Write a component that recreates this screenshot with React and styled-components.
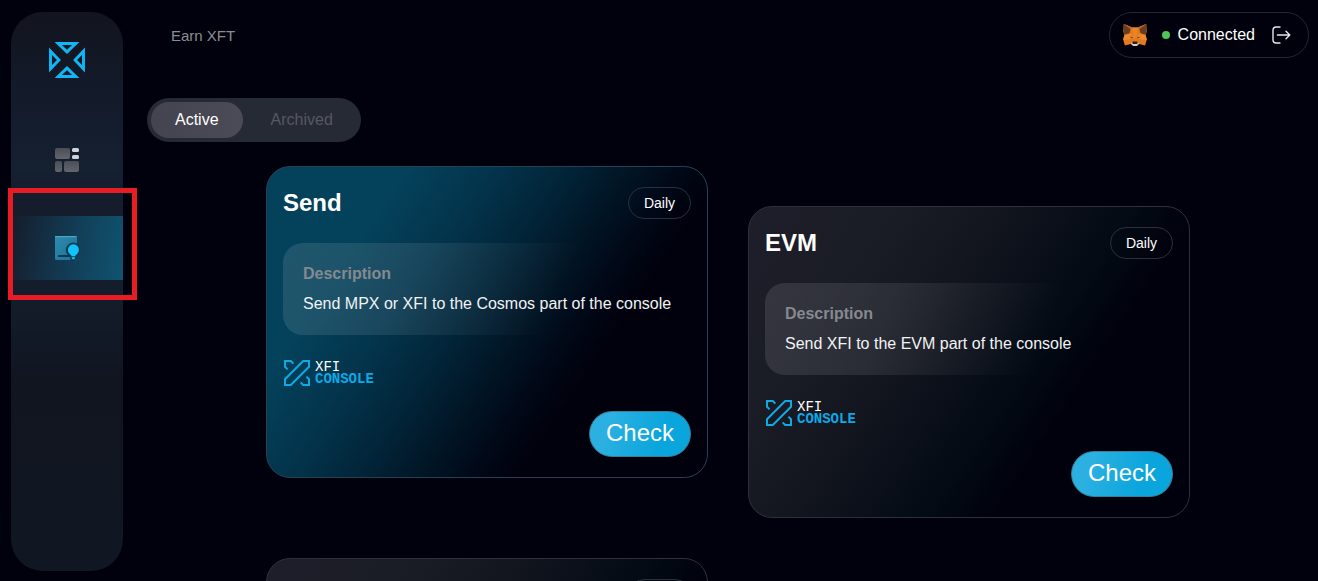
import React, { useState } from 'react';
import styled, { createGlobalStyle, css } from 'styled-components';

const colors = {
  background: '#00010c',
  white: '#ffffff',
  muted: '#8b8d93',
  accent: '#0fb7f5',
  green: '#4fc65a',
  red: '#e81c24',
};

const GlobalStyle = createGlobalStyle`
  * {
    box-sizing: border-box;
  }
  body {
    margin: 0;
    overflow: hidden;
    background: ${colors.background};
    color: ${colors.white};
    font-family: 'Liberation Sans', Arial, sans-serif;
    font-size: 16px;
  }
  button {
    font-family: inherit;
    cursor: pointer;
  }
`;

const Shell = styled.div`
  display: flex;
  align-items: flex-start;
  height: 100vh;
  overflow: hidden;
`;

const Sidebar = styled.aside`
  display: flex;
  flex-direction: column;
  align-items: center;
  flex: none;
  width: 112px;
  height: calc(100vh - 22px);
  margin: 12px 24px 10px 11px;
  padding-top: 30px;
  border-radius: 32px;
  background: linear-gradient(
    180deg,
    #12141e 0%,
    #131a2a 14%,
    #152031 28%,
    #151c2c 34%,
    #141d2c 50%,
    #101520 66%,
    #111722 100%
  );
`;

const Nav = styled.nav`
  display: flex;
  flex-direction: column;
  gap: 24px;
  width: 100%;
  margin-top: 50px;
`;

const NavLink = styled.a`
  position: relative;
  display: flex;
  align-items: center;
  justify-content: center;
  height: 64px;
  ${(props) =>
    props.$active &&
    css`
      background: linear-gradient(100deg, #151f2f 5%, #12405a 60%, #0f5470 100%);
    `}
`;

const Highlight = styled.span`
  position: absolute;
  top: -28px;
  right: -14px;
  bottom: -20px;
  left: -3px;
  border: 5px solid ${colors.red};
  pointer-events: none;
`;

const Main = styled.main`
  display: flex;
  flex-direction: column;
  flex: 1;
  min-width: 0;
  padding: 12px 9px 0 0;
`;

const Header = styled.header`
  display: flex;
  align-items: center;
  justify-content: space-between;
  height: 46px;
  padding-left: 24px;
`;

const PageTitle = styled.h1`
  margin: 0;
  color: ${colors.muted};
  font-size: 15px;
  font-weight: 400;
`;

const Wallet = styled.button`
  display: flex;
  align-items: center;
  height: 46px;
  padding: 0 17px 0 13px;
  border: 1px solid #24262f;
  border-radius: 23px;
  background: transparent;
  color: ${colors.white};
  font-size: 16px;
`;

const Status = styled.span`
  display: flex;
  align-items: center;
  gap: 8px;
  margin: 0 17px 0 15px;

  &::before {
    content: '';
    width: 8px;
    height: 8px;
    border-radius: 50%;
    background: ${colors.green};
  }
`;

const Tabs = styled.div`
  display: flex;
  align-self: flex-start;
  gap: 4px;
  height: 44px;
  margin-top: 40px;
  padding: 4px;
  border-radius: 22px;
  background: #262a35;
`;

const Tab = styled.button`
  padding: 0 24px;
  border: 0;
  border-radius: 18px;
  background: transparent;
  color: #565862;
  font-size: 16px;
  ${(props) =>
    props.$active &&
    css`
      background: linear-gradient(90deg, #434450, #4a4b57);
      color: ${colors.white};
    `}
`;

const Quests = styled.section`
  display: grid;
  grid-template-columns: repeat(2, minmax(0, 1fr));
  gap: 40px;
  width: 100%;
  max-width: 924px;
  margin: 24px auto 0;
`;

const cardBackgrounds = {
  blue: 'linear-gradient(124deg, #04425b 0%, #04415a 22%, #03344c 35%, #022539 46%, #011525 56%, #010817 64%, #00010c 71%)',
  gray: 'linear-gradient(124deg, #1d1e29 0%, #1a1c26 22%, #13161f 38%, #0a0f19 50%, #030a14 60%, #00010c 70%)',
};

const Card = styled.article`
  display: flex;
  flex-direction: column;
  gap: 24px;
  padding: 20px 16px;
  border: 1px solid ${(props) => (props.$tone === 'blue' ? '#264251' : '#2d2f39')};
  border-radius: 24px;
  background: ${(props) => cardBackgrounds[props.$tone]};

  &:nth-child(even) {
    margin-top: 40px;
  }
  &:nth-child(odd) {
    margin-bottom: 40px;
  }
`;

const CardHeader = styled.div`
  display: flex;
  align-items: center;
  justify-content: space-between;
  height: 32px;
`;

const CardTitle = styled.h2`
  margin: 0;
  font-size: 24px;
  line-height: 32px;
  font-weight: 700;
`;

const Period = styled.span`
  height: 32px;
  padding: 0 15px;
  border: 1px solid #2a303b;
  border-radius: 16px;
  font-size: 14px;
  line-height: 30px;
`;

const Description = styled.div`
  display: flex;
  flex-direction: column;
  gap: 8px;
  padding: 20px;
  border-radius: 20px;
  background: linear-gradient(
    110deg,
    rgba(255, 255, 255, 0.11) 0%,
    rgba(255, 255, 255, 0.09) 30%,
    rgba(255, 255, 255, 0) 68%
  );
  line-height: 22px;

  h3 {
    margin: 0;
    color: #86898f;
    font-size: 16px;
  }
  p {
    margin: 0;
    color: #f1f3f5;
    white-space: nowrap;
  }
`;

const Brand = styled.div`
  display: flex;
  align-items: center;
  gap: 4px;
  height: 28px;
`;

const BrandName = styled.div`
  display: flex;
  flex-direction: column;
  font-family: 'Liberation Mono', monospace;
  font-size: 14px;
  line-height: 12px;
`;

const BrandAccent = styled.span`
  color: #0ba9e6;
  font-weight: 700;
`;

const CheckButton = styled.button`
  align-self: flex-end;
  height: 46px;
  padding: 0 16px 2px;
  border: 1px solid #3b7f97;
  border-radius: 23px;
  background: linear-gradient(110deg, #2bb0e1 20%, #0aa5dc 70%);
  color: ${colors.white};
  font-size: 24px;
`;

const Logo = () => (
  <svg width="36" height="36" viewBox="0 0 36 36" fill="none" stroke={colors.accent} strokeWidth="2.9">
    <path d="M9.2 1.5h17.6L18 9.9z" />
    <path d="M9.2 34.5h17.6L18 26.1z" />
    <path d="M1.5 9.2v17.6L9.9 18z" />
    <path d="M34.5 9.2v17.6L26.1 18z" />
  </svg>
);

const DashboardIcon = () => (
  <svg width="24" height="24" viewBox="0 0 24 24">
    <defs>
      <linearGradient id="tile" x1="0" y1="0" x2="0" y2="1">
        <stop offset="0" stopColor="#4b4e57" />
        <stop offset="1" stopColor="#62656e" />
      </linearGradient>
    </defs>
    <rect width="15" height="11" rx="2" fill="url(#tile)" />
    <rect y="13" width="7" height="11" rx="2" fill="url(#tile)" />
    <rect x="9" y="13" width="15" height="11" rx="2" fill="url(#tile)" />
    <rect x="17" width="7" height="4" rx="1.5" fill="#d0d3dc" />
    <rect x="17" y="7" width="7" height="4" rx="1.5" fill="#d0d3dc" />
  </svg>
);

const EarnIcon = () => (
  <svg width="26" height="26" viewBox="-1 -1 26 26">
    <defs>
      <linearGradient id="page" x1="0" y1="0" x2="1" y2="1">
        <stop offset="0" stopColor="#2c8caf" />
        <stop offset="1" stopColor="#1f7093" />
      </linearGradient>
    </defs>
    <rect width="22" height="24" rx="1.5" fill="url(#page)" />
    <path d="M0 .6h21.5" stroke="#4da6c4" strokeWidth="1.2" />
    <path d="M3 20h12" stroke="#0b3850" strokeWidth="2" />
    <circle cx="18.2" cy="14" r="7.4" fill="#0e3b54" />
    <path d="M14 19h8v3.4l-2 2.2h-4z" fill="#0e3b54" />
    <circle cx="18.4" cy="13.8" r="5.5" fill="#12c2fa" />
    <path d="M14.8 17.4h7.2l-2 2.8h-3.2z" fill="#12c2fa" />
    <path d="M16.4 21.2h4l-1 2h-2z" fill="#12c2fa" />
  </svg>
);

const FoxIcon = () => (
  <svg width="24" height="24" viewBox="0 0 24 24">
    <path d="M.8 1l8.6 3.4h5.2L23.2 1l.5 7.2-1 4.2 1.1 4.2-1.7 5.8-5.8-1.5-2.6 2.1h-3.4l-2.6-2.1-5.8 1.5-1.7-5.8 1.1-4.2-1-4.2z" fill="#e37a22" />
    <path d="M.8 1l7 4.8-1.4 4.4-5.1 1.6-.6-3.6z" fill="#6b3d20" />
    <path d="M23.2 1l-7 4.8 1.4 4.4 5.1 1.6.6-3.6z" fill="#6b3d20" />
    <path d="M.8 1l8.6 3.4-1.6 1.8z" fill="#b8672a" />
    <path d="M23.2 1l-8.6 3.4 1.6 1.8z" fill="#b8672a" />
    <path d="M1.3 12.4l6.9-1.6 1.2 4.6-4.2 1.2-5 .2z" fill="#f08a2a" />
    <path d="M22.7 12.4l-6.9-1.6-1.2 4.6 4.2 1.2 5 .2z" fill="#f08a2a" />
    <path d="M9.4 4.4h5.2l-1 10.6h-3.2z" fill="#ea8428" />
    <path d="M6.4 13.4l3.2.8-.6 1.2z" fill="#5a3a26" />
    <path d="M17.6 13.4l-3.2.8.6 1.2z" fill="#5a3a26" />
    <path d="M7.7 20.2l2.3-.8h4l2.3.8-2.6 2.8h-3.4z" fill="#d9cfc8" />
    <path d="M9.4 18.9l.6-.5h4l.6.5-.2 2H9.6z" fill="#2b211c" />
  </svg>
);

const LogoutIcon = () => (
  <svg width="19" height="18" viewBox="0 0 19 18" fill="none" stroke="#e6e7ea" strokeWidth="1.4" strokeLinecap="round" strokeLinejoin="round">
    <path d="M8 1H4.2Q1 1 1 4.2v9.6Q1 17 4.2 17H8" />
    <path d="M5.4 9h12.4M14 5.2L17.8 9 14 12.8" />
  </svg>
);

const ConsoleIcon = () => (
  <svg width="28" height="28" viewBox="0 0 28 28" fill="none" stroke="#0fa9e4" strokeWidth="2">
    <path d="M4.6 10.4L2 7.8V2h5.8l2.6 2.6" />
    <path d="M20.2 2H26v5.8L7.8 26H2v-5.8z" />
    <path d="M23.4 17.6l2.6 2.6V26h-5.8l-2.6-2.6" />
  </svg>
);

const quests = [
  {
    title: 'Send',
    tone: 'blue',
    period: 'Daily',
    text: 'Send MPX or XFI to the Cosmos part of the console',
  },
  {
    title: 'EVM',
    tone: 'gray',
    period: 'Daily',
    text: 'Send XFI to the EVM part of the console',
  },
  {
    title: 'EVM',
    tone: 'gray',
    period: 'Daily',
    text: 'Send XFI to the EVM part of the console',
  },
];

const Quest = ({ title, tone, period, text }) => (
  <Card $tone={tone}>
    <CardHeader>
      <CardTitle>{title}</CardTitle>
      <Period>{period}</Period>
    </CardHeader>
    <Description>
      <h3>Description</h3>
      <p>{text}</p>
    </Description>
    <Brand>
      <ConsoleIcon />
      <BrandName>
        <span>XFI</span>
        <BrandAccent>CONSOLE</BrandAccent>
      </BrandName>
    </Brand>
    <CheckButton type="button">Check</CheckButton>
  </Card>
);

const App = () => {
  const [tab, setTab] = useState('Active');

  return (
    <>
      <GlobalStyle />
      <Shell>
        <Sidebar>
          <Logo />
          <Nav>
            <NavLink href="#dashboard" aria-label="Dashboard">
              <DashboardIcon />
            </NavLink>
            <NavLink href="#earn" aria-label="Earn XFT" $active>
              <EarnIcon />
              <Highlight />
            </NavLink>
          </Nav>
        </Sidebar>
        <Main>
          <Header>
            <PageTitle>Earn XFT</PageTitle>
            <Wallet type="button">
              <FoxIcon />
              <Status>Connected</Status>
              <LogoutIcon />
            </Wallet>
          </Header>
          <Tabs role="tablist">
            {['Active', 'Archived'].map((name) => (
              <Tab
                key={name}
                type="button"
                role="tab"
                aria-selected={tab === name}
                $active={tab === name}
                onClick={() => setTab(name)}
              >
                {name}
              </Tab>
            ))}
          </Tabs>
          <Quests>
            {quests.map((quest, index) => (
              <Quest key={index} {...quest} />
            ))}
          </Quests>
        </Main>
      </Shell>
    </>
  );
};

export default App;
